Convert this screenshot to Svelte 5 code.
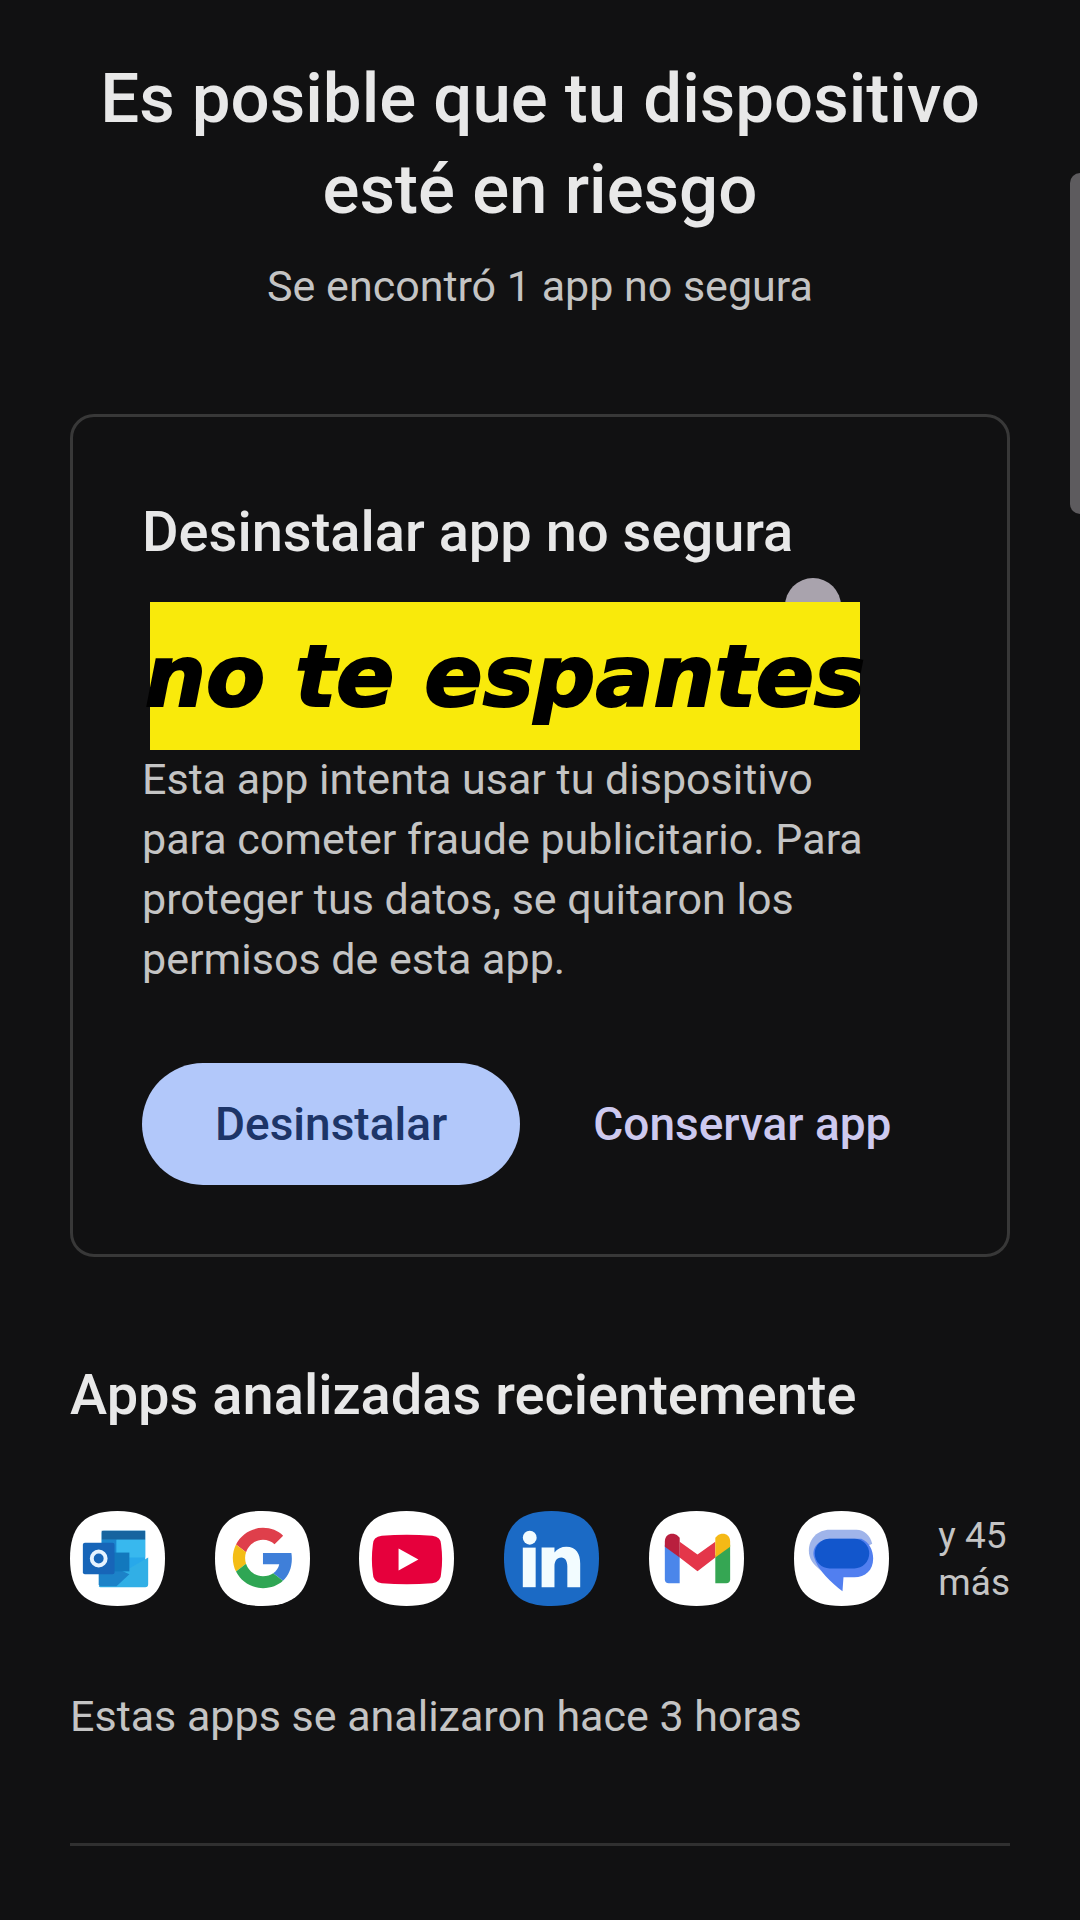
<script>
	const apps = ['Outlook', 'Google', 'YouTube', 'LinkedIn', 'Gmail', 'Mensajes'];

	let others = 45;
	let hours = 3;
</script>

<main>
	<header>
		<h1>Es posible que tu dispositivo esté en riesgo</h1>
		<p>Se encontró 1 app no segura</p>
	</header>

	<section class="card">
		<h2>Desinstalar app no segura</h2>

		<div class="app-row">
			<span class="touch"></span>
			<strong class="caption">no te espantes</strong>
		</div>

		<p class="reason">
			Esta app intenta usar tu dispositivo para cometer fraude publicitario. Para proteger tus
			datos, se quitaron los permisos de esta app.
		</p>

		<div class="actions">
			<button class="filled">Desinstalar</button>
			<button>Conservar app</button>
		</div>
	</section>

	<section class="recent">
		<h2>Apps analizadas recientemente</h2>

		<div class="apps">
			{#each apps as app}
				<svg viewBox="0 0 96 96" role="img" aria-label={app}>
					<path
						class:linkedin={app === 'LinkedIn'}
						class="tile"
						d="M48 0C81 0 96 15 96 48S81 96 48 96 0 81 0 48 15 0 48 0z"
					/>
					{#if app === 'Outlook'}
						<path fill="#28a8ea" d="M32 22a2 2 0 0 1 2-2h42v56H32z" />
						<path fill="#16649f" d="M32 20h44v9H32z" />
						<path fill="#1b86ce" d="M32 29h15v18H32z" />
						<path fill="#38b8ee" d="M47 29h29v18H47z" />
						<path fill="#31afe6" d="M29 76l50-29v27a3 3 0 0 1-3 3H31a2 2 0 0 1-2-1z" />
						<path fill="#1c82c8" d="M29 50l31 14-13 12H31a2 2 0 0 1-2-2z" />
						<path fill="#1278bd" d="M36 42h24v19H36z" />
						<rect x="13" y="32" width="32" height="32" rx="2" fill="#1765b8" />
						<circle cx="29" cy="48" r="7" fill="none" stroke="#e6f3ff" stroke-width="4" />
					{:else if app === 'Google'}
						<g transform="translate(18 17) scale(1.27)">
							<path fill="#df3f4b" d="M24 9.5c3.54 0 6.71 1.22 9.21 3.6l6.85-6.85C35.9 2.38 30.47 0 24 0 14.62 0 6.51 5.38 2.56 13.22l7.98 6.19C12.43 13.72 17.74 9.5 24 9.5z" />
							<path fill="#3f7fd9" d="M46.98 24.55c0-1.57-.15-3.09-.38-4.55H24v9.02h12.94c-.58 2.96-2.26 5.48-4.78 7.18l7.73 6c4.51-4.18 7.09-10.36 7.09-17.65z" />
							<path fill="#f4bd16" d="M10.53 28.59c-.48-1.45-.76-2.99-.76-4.59s.27-3.14.76-4.59l-7.98-6.19C.92 16.46 0 20.12 0 24c0 3.88.92 7.54 2.56 10.78l7.97-6.19z" />
							<path fill="#2fa654" d="M24 48c6.48 0 11.93-2.13 15.89-5.81l-7.73-6c-2.15 1.45-4.92 2.3-8.16 2.3-6.26 0-11.57-4.22-13.47-9.91l-7.98 6.19C6.51 42.62 14.62 48 24 48z" />
						</g>
					{:else if app === 'YouTube'}
						<path fill="#e6003c" d="M23 25Q48 23 74 25 83 26 83 34 85 49 83 63 83 72 74 73 48 75 23 73 14 72 14 63 12 49 14 34 14 26 23 25z" />
						<path fill="#fff" d="M40 38l20 11-20 11z" />
					{:else if app === 'LinkedIn'}
						<circle cx="26" cy="27" r="7" fill="#f2fcff" />
						<path fill="#f2fcff" d="M19 37h13v40H19z" />
						<path fill="#f2fcff" d="M38 37h13v5c3-4 7-6 12-6 10 0 14 7 14 17v24H64V56c0-5-2-9-6-9-5 0-7 4-7 9v21H38z" />
					{:else if app === 'Gmail'}
						<path fill="#4b86ea" d="M16 34l15 11v28H20a4 4 0 0 1-4-4z" />
						<path fill="#35a653" d="M67 45l15-11v35a4 4 0 0 1-4 4H67z" />
						<path fill="#e4364a" d="M31 31l18 13 18-13v16L49 61 31 47z" />
						<path fill="#b91f3e" d="M16 36v-5c0-8 8-10 13-6l2 2v20z" />
						<path fill="#f5b916" d="M82 36v-5c0-8-8-10-13-6l-2 2v20z" />
					{:else}
						<path fill="#9fb4ea" d="M36 19h27c8 0 14 6 16 14L27 60C19 54 15 48 15 40c0-12 9-21 21-21z" />
						<path fill="#517ff0" d="M20 46C18 36 26 28 38 28L68 28C76 31 80 40 80 48 80 60 72 67 61 67H50l-1 14C38 73 24 60 20 46z" />
						<rect x="21" y="28" width="55" height="30" rx="15" fill="#1256cc" />
					{/if}
				</svg>
			{/each}
			<span class="more">y {others}<br />más</span>
		</div>

		<p>Estas apps se analizaron hace {hours} horas</p>
	</section>

	<hr />
	<div class="scrollbar"></div>
</main>

<style>
	:global(body) {
		margin: 0;
		background: #111112;
	}

	main {
		position: relative;
		box-sizing: border-box;
		min-height: 100vh;
		padding: 53px 70px 72px;
		color: #c4c4c4;
		font-family: Roboto, 'Liberation Sans', sans-serif;
		font-size: 43px;
		line-height: 60px;
		overflow: hidden;
	}

	h1,
	h2,
	p {
		margin: 0;
	}

	h1,
	h2 {
		color: #e8e8e8;
		font-weight: 500;
	}

	header {
		margin-bottom: 98px;
		text-align: center;
	}

	h1 {
		margin-bottom: 21px;
		font-size: 69px;
		line-height: 91px;
	}

	h2 {
		font-size: 56px;
	}

	.card {
		padding: 85px 69px 69px;
		border: 3px solid #383838;
		border-radius: 24px;
	}

	.app-row {
		position: relative;
		height: 187px;
	}

	.touch {
		position: absolute;
		top: 16px;
		left: 643px;
		width: 56px;
		height: 56px;
		border-radius: 50%;
		background: #a9a3ad;
	}

	.caption {
		position: absolute;
		top: 40px;
		left: 8px;
		display: flex;
		align-items: center;
		justify-content: center;
		width: 710px;
		height: 148px;
		background: #f9ea0b;
		color: #000;
		font-family: 'DejaVu Sans', sans-serif;
		font-size: 86px;
		font-style: italic;
		font-weight: 700;
		white-space: nowrap;
		-webkit-text-stroke: 2px #000;
	}

	.reason {
		max-width: 750px;
		margin-bottom: 74px;
	}

	.actions {
		display: flex;
	}

	button {
		height: 122px;
		padding: 0 73px;
		border: 0;
		border-radius: 61px;
		background: none;
		color: #cdc9ef;
		font: inherit;
		font-size: 46px;
		font-weight: 500;
		white-space: nowrap;
	}

	.filled {
		background: #b2c8fa;
		color: #1d3568;
	}

	.recent {
		padding: 108px 0 97px;
	}

	.apps {
		display: flex;
		align-items: center;
		justify-content: space-between;
		margin: 86px 0 80px;
	}

	svg {
		width: 95px;
		height: 95px;
	}

	.tile {
		fill: #fff;
	}

	.linkedin {
		fill: #1b6ac5;
	}

	.more {
		font-size: 37px;
		line-height: 47px;
	}

	hr {
		margin: 0;
		border: 0;
		border-top: 3px solid #303030;
	}

	.scrollbar {
		position: absolute;
		top: 173px;
		right: 0;
		width: 10px;
		height: 341px;
		border-radius: 10px 0 0 10px;
		background: #5d5b5e;
	}
</style>
